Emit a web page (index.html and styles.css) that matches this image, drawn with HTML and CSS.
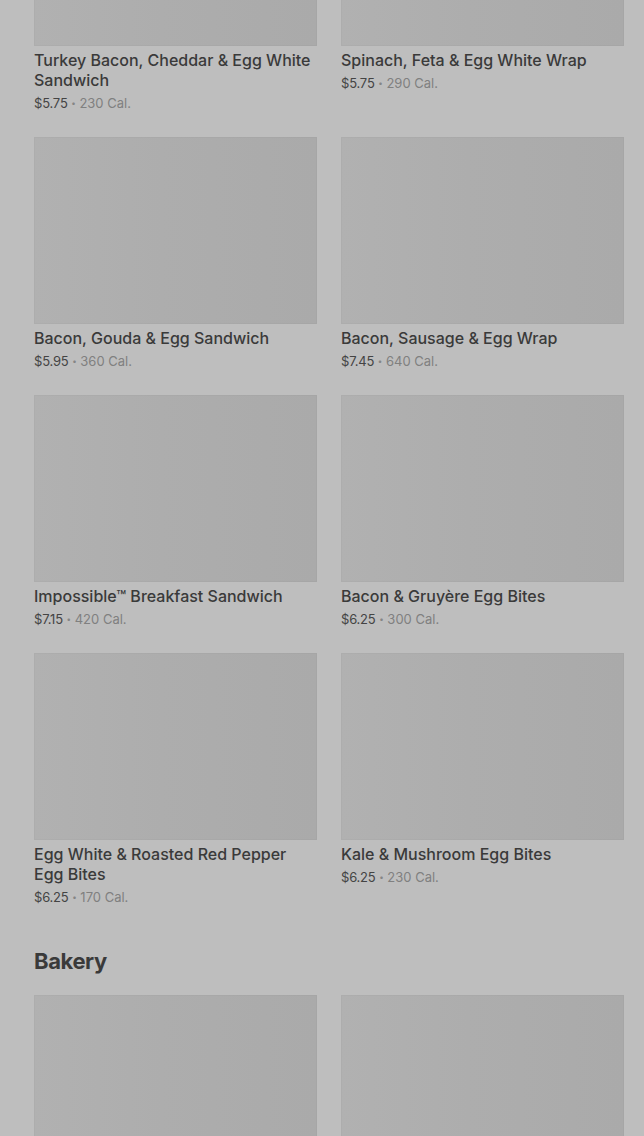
FILE: index.html
```html
<!DOCTYPE html>
<html lang="en">
<head>
<meta charset="utf-8">
<title>Menu</title>
<link rel="stylesheet" href="styles.css">
</head>
<body>
<main class="menu">
  <section class="section">
    <div class="grid">
      <article class="item">
        <div class="thumb"></div>
        <h3 class="name">Turkey Bacon, Cheddar &amp; Egg White Sandwich</h3>
        <p class="meta"><span class="price">$5.75</span> <span class="dot">•</span> <span class="cal">230 Cal.</span></p>
      </article>
      <article class="item">
        <div class="thumb"></div>
        <h3 class="name">Spinach, Feta &amp; Egg White Wrap</h3>
        <p class="meta"><span class="price">$5.75</span> <span class="dot">•</span> <span class="cal">290 Cal.</span></p>
      </article>
      <article class="item">
        <div class="thumb"></div>
        <h3 class="name">Bacon, Gouda &amp; Egg Sandwich</h3>
        <p class="meta"><span class="price">$5.95</span> <span class="dot">•</span> <span class="cal">360 Cal.</span></p>
      </article>
      <article class="item">
        <div class="thumb"></div>
        <h3 class="name">Bacon, Sausage &amp; Egg Wrap</h3>
        <p class="meta"><span class="price">$7.45</span> <span class="dot">•</span> <span class="cal">640 Cal.</span></p>
      </article>
      <article class="item">
        <div class="thumb"></div>
        <h3 class="name">Impossible™ Breakfast Sandwich</h3>
        <p class="meta"><span class="price">$7.15</span> <span class="dot">•</span> <span class="cal">420 Cal.</span></p>
      </article>
      <article class="item">
        <div class="thumb"></div>
        <h3 class="name">Bacon &amp; Gruyère Egg Bites</h3>
        <p class="meta"><span class="price">$6.25</span> <span class="dot">•</span> <span class="cal">300 Cal.</span></p>
      </article>
      <article class="item">
        <div class="thumb"></div>
        <h3 class="name">Egg White &amp; Roasted Red Pepper Egg Bites</h3>
        <p class="meta"><span class="price">$6.25</span> <span class="dot">•</span> <span class="cal">170 Cal.</span></p>
      </article>
      <article class="item">
        <div class="thumb"></div>
        <h3 class="name">Kale &amp; Mushroom Egg Bites</h3>
        <p class="meta"><span class="price">$6.25</span> <span class="dot">•</span> <span class="cal">230 Cal.</span></p>
      </article>
    </div>
  </section>
  <section class="section">
    <h2 class="section-title">Bakery</h2>
    <div class="grid">
      <article class="item">
        <div class="thumb"></div>
      </article>
      <article class="item">
        <div class="thumb"></div>
      </article>
    </div>
  </section>
</main>
</body>
</html>
```
FILE: styles.css
```css
html, body {
  margin: 0;
  padding: 0;
  background: #bebebe;
  height: 100%;
  overflow: hidden;
}
body {
  font-family: Inter, "Noto Sans", sans-serif;
  color: #3b3b3b;
}
.menu {
  margin-top: -141px;
  padding: 0 20px 0 34px;
}
.grid {
  display: grid;
  grid-template-columns: 283px 283px;
  column-gap: 24px;
  row-gap: 25px;
}
.item {
  display: flex;
  flex-direction: column;
}
.thumb {
  height: 187px;
  background: linear-gradient(90deg, #b1b1b1 0%, #adadad 45%, #aaaaaa 100%);
  box-shadow: inset 0 0 0 1px rgba(0,0,0,0.02);
}
.name {
  margin: 4px 0 0;
  font-size: 16px;
  line-height: 20px;
  font-weight: 500;
  color: #3a3a3a;
}
.meta {
  margin: 4px 0 0;
  font-size: 13px;
  line-height: 18px;
  color: #444444;
}
.price {
  letter-spacing: -0.2px;
}
.dot {
  font-size: 8px;
  color: #858585;
  vertical-align: 2px;
}
.cal {
  color: #808080;
}
.section-title {
  margin: 41px 0 20px;
  font-size: 22px;
  line-height: 28px;
  font-weight: 700;
  color: #3a3a3a;
  letter-spacing: -0.4px;
}
```
